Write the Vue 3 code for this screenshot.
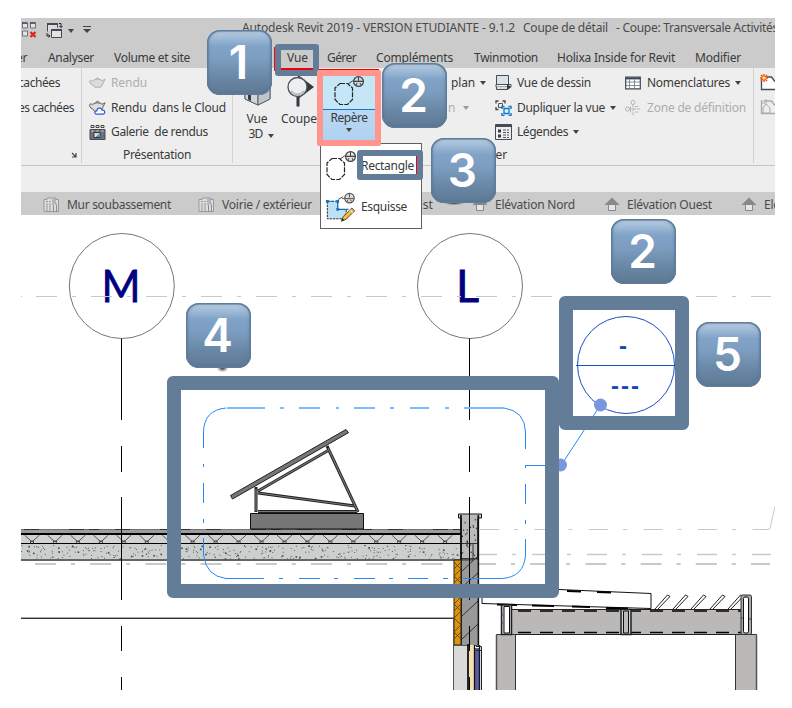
<script setup>
// v-fit="width": tracks a label so that it fills the given width
const vFit = {
  mounted(el, { value }) {
    const natural = el.getBoundingClientRect().width
    el.style.letterSpacing = (value - natural) / el.textContent.length + 'px'
  },
}

const tabs = [
  ['er', 11], ['Analyser', 46], ['Volume et site', 76], ['Vue', 21], ['Gérer', 29],
  ['Compléments', 77], ['Twinmotion', 64], ['Holixa Inside for Revit', 118], ['Modifier', 46],
]

const badges = [
  { n: 1, c: 'b1' }, { n: 2, c: 'b2' }, { n: 3, c: 'b3' },
  { n: 4, c: 'b4' }, { n: 2, c: 'b5' }, { n: 5, c: 'b6' },
]

const insulation = Array.from({ length: 19 }, (_, i) => 32 + i * 22.95)

let seed = 11
const rnd = () => (seed = (seed * 16807) % 2147483647) / 2147483647
const specks = Array.from({ length: 330 }, () => ({
  x: 21 + rnd() * 440, y: 545 + rnd() * 13.5, s: rnd() > 0.85 ? 1.6 : 0.9,
}))
const parapetSpecks = Array.from({ length: 24 }, () => ({ x: 462 + rnd() * 14, y: 519 + rnd() * 38 }))
const louvers = [655, 673, 691, 710, 728]
</script>

<template>
  <div class="page">
    <svg class="defs" width="0" height="0">
      <defs>
        <symbol id="teapot" viewBox="0 0 18 14">
          <path d="M4 4.500c2-2 8-2 10 0l3-1.500-2.500 5-2 3.500H6L4 9C1 8 0 6 1 4.500c1-1 2.500 0 3 1M7 3l2-2 2 2" fill="#dcdcdc" stroke="currentColor" />
        </symbol>
        <symbol id="cloudpot" viewBox="0 0 18 16">
          <path d="M4 4c2-2 8-2 10 0l3-1.500-2.500 5-2 4H6L4 9C1 8 0 6 1 4c1-1 2.500 0 3 1M7 2.500l2-2 2 2" fill="#ddd" stroke="#555" />
          <path d="M8 14.500c-2.500 0-2.500-3.500.3-3.500.2-3.500 4.700-3.800 5.500-.8 3.500-.3 4 4.300.8 4.300z" fill="#fff" stroke="#2a5fd0" stroke-width="1.300" />
        </symbol>
        <symbol id="gallery" viewBox="0 0 16 16">
          <path d="M1.500 1.500h3v2h-3zM6.500 1.500h3v2h-3zM11.500 1.500h3v2h-3z" fill="#eee" stroke="#444" />
          <path d="M.5 5.500h15v10H.5z" fill="#6d737c" stroke="#474c54" />
          <path d="M2 7h2M7 7h2M12 7h2" stroke="#ddd" />
          <path d="M4.500 8.500h6v5h-6z" fill="#eee" stroke="#333" />
          <path d="M6 13l4-4v4z" fill="#479bd5" /><path d="M6 9h3l-3 3z" fill="#ead46a" />
        </symbol>
        <symbol id="closewin" viewBox="0 0 16 17">
          <path d="M1.500 1v5h5V1M9.500 1v5h5V1M1.500 9v5h5V9z" fill="#e4e4e4" stroke="#6b727c" />
          <path d="M1 1h5.500M9 1h5.500" stroke="#333c48" stroke-width="1.500" />
          <path d="M9.500 10l5 5M14.500 10l-5 5" stroke="#d8281d" stroke-width="2.300" />
        </symbol>
        <symbol id="switchwin" viewBox="0 0 18 17">
          <path d="M2.500 9.500v-8h10v4" fill="#ddd" stroke="#434a55" /><path d="M2 2h11" stroke="#434a55" stroke-width="2" />
          <path d="M6.500 7.500h10v8h-10z" fill="#e2e2e2" stroke="#434a55" /><path d="M6 8h11" stroke="#434a55" stroke-width="2" />
          <path d="M14 1.500h2v4M14.500 4L16 5.500 17.500 4M2 11v3h3M3.500 12.500L5 14l-1.500 1.500" fill="none" stroke="#222" />
        </symbol>
        <symbol id="sheet" viewBox="0 0 17 16">
          <path d="M1 2.500h3V1h9v1.500h2.500v12H1z" fill="#dcdcdc" stroke="#97999c" />
          <path d="M3 4.500h6M3 7h11M3 9h6M3 11h6M3 13h6" stroke="#999" stroke-dasharray="2 1" />
          <path d="M10 2v4M12 2v5M10.500 8v7M13.500 8v7" stroke="#8b8e91" />
        </symbol>
        <symbol id="house" viewBox="0 0 16 15">
          <path d="M8 .5L15.500 8H.5z" fill="#85888c" /><path d="M4.500 7.500h7v6h-7z" fill="#e6e6e6" stroke="#85888c" />
        </symbol>
        <symbol id="drafting" viewBox="0 0 17 16">
          <path d="M1.500.5h12v9h-12z" fill="#dfe2e5" stroke="#444c59" /><path d="M1 9.500h15v2.500H1z" fill="#fff" stroke="#444c59" />
          <path d="M1.500 12v2.500h11l3-2.500" fill="#ddd" stroke="#444c59" /><path d="M12 9l4 3-4 3z" fill="#2f3945" />
        </symbol>
        <symbol id="duplicate" viewBox="0 0 17 16">
          <path d="M1 3.500V1h2.500M7.500 1H10v2.500M1 7v2.500h2.500" fill="none" stroke="#444" stroke-width="1.300" /><path d="M3.500 3.500h4v4h-4z" fill="none" stroke="#555" />
          <path d="M7 9V6.500h2.500M13.500 6.500H16V9M7 13v2.500h2.500M13.500 15.500H16V13" fill="none" stroke="#0b78c8" stroke-width="1.400" /><path d="M9 8.500h5v5H9z" fill="#d9f1ff" stroke="#0b78c8" stroke-width="1.300" />
        </symbol>
        <symbol id="legend" viewBox="0 0 17 16">
          <path d="M.5.5h16v15H.5z" fill="#eee" stroke="#444b55" /><path d="M1 2h15" stroke="#444b55" stroke-width="2" />
          <path d="M3 5.500h3v3H3zM3 10.500h3v3H3z" fill="#2f3944" /><path d="M8 6h6M8 8.500h6M8 11h6M8 13.500h6" stroke="#555" stroke-dasharray="3 1" />
        </symbol>
        <symbol id="schedule" viewBox="0 0 16 13">
          <path d="M.7.7h14.600v11.600H.7z" fill="#fff" stroke="#3d4651" stroke-width="1.200" /><path d="M1 2h14" stroke="#3d4651" stroke-width="1.800" />
          <path d="M1 5.500h14M1 9h14M4.500 3v9M9.500 3v9" stroke="#7a828b" stroke-width=".9" />
        </symbol>
        <symbol id="scope" viewBox="0 0 16 16">
          <circle cx="8" cy="2.500" r="2" fill="none" stroke="#b4b4b4" /><circle cx="2.500" cy="9" r="2" fill="none" stroke="#b4b4b4" />
          <path d="M4.500 9H16M8 4.500V16M10 6.500h4M10 12h4M5.500 12.500v-6" stroke="#b4b4b4" stroke-dasharray="3 .8" fill="none" />
        </symbol>
        <symbol id="callout" viewBox="0 0 32 32">
          <path d="M7 7.500h7.500l5 4.500v11.500L14.500 28.500H7L2 23.500V12z" fill="none" stroke="#222" stroke-width="1.200" stroke-dasharray="5 1.200" />
          <path d="M15 8l4.500-3H30" fill="none" stroke="#444" />
          <circle cx="25.500" cy="5.500" r="4.900" fill="#ccc" fill-opacity=".5" stroke="#444" stroke-width="1.200" /><path d="M20 5.500h11M25.500 1v4.500M23 9l1-2M28 9l-1-2" stroke="#444" />
        </symbol>
        <symbol id="sketch" viewBox="0 0 34 32">
          <path d="M2.500 9v18.500h20V17.500h-9V9z" fill="#bce0f4" stroke="#222" stroke-dasharray="2.500 1" />
          <path d="M2.500 9h11v8.500h12" fill="none" stroke="#1671bd" stroke-width="1.300" stroke-dasharray="3 1" />
          <path d="M1 7.500h3v3H1zM12 7.500h3v3h-3zM12 16h3v3h-3z" fill="#1671bd" />
          <path d="M14 7l5-3" stroke="#444" /><circle cx="26" cy="5.500" r="5" fill="#ddd" stroke="#555" stroke-width="1.300" /><path d="M18 6h13M26 1v4M23.500 9l1-2M28 9l-1-2" stroke="#555" />
          <path d="M17.500 30l2-5 9-9 3 3-9 9z" fill="#f4b93c" stroke="#4a4336" /><path d="M26.500 18l3 3" stroke="#ddd" stroke-width="1.500" /><path d="M17.500 30l1-3 2 2z" fill="#222" />
        </symbol>
        <symbol id="house3d" viewBox="0 0 27 32">
          <path d="M1 12L13 3l13 9v12l-12 6-13-6z" fill="#e6e8ea" stroke="#596069" /><path d="M1 12l13 5v13L1 24z" fill="#d0d3d7" stroke="#596069" />
          <path d="M4 15l3 1.500V26l-3-1.500z" fill="#333b45" /><path d="M14 17l12-5v12l-12 6z" fill="#c0c5ca" stroke="#596069" />
        </symbol>
        <symbol id="section" viewBox="0 0 28 32">
          <path d="M11 0l16 12-16 12z" fill="#303842" /><path d="M11 21v10.500" stroke="#303842" stroke-width="3" />
          <circle cx="10.500" cy="12" r="9.500" fill="#eceeef" stroke="#4b525a" stroke-width="1.300" /><path d="M4 16a8 8 0 0 0 13 0" fill="none" stroke="#bbb" stroke-width="2" />
        </symbol>
        <symbol id="newsheet" viewBox="0 0 20 18">
          <path d="M1.500 5v10.500h18V7h-5l-3-4h-5" fill="#fff" stroke="#434b57" stroke-width="1.300" />
          <path d="M4 0v8M0 4h8M1 1l6 6M7 1L1 7" stroke="#e5481c" stroke-width="1.400" /><circle cx="4" cy="4" r="1.800" fill="#ffe94a" />
        </symbol>
        <symbol id="views" viewBox="0 0 20 18">
          <path d="M1.500 2v13.500h18V7h-5l-3-4h-8" fill="#eee" stroke="#aaa" stroke-width="1.300" /><path d="M3 10l3-4 4 4v5H3zM6 1v5M2 5h3" fill="#eee" stroke="#aaa" />
        </symbol>
      </defs>
    </svg>

    <main class="capture">
      <header class="titlebar">
        <div class="quick">
          <svg class="q1"><use href="#closewin" /></svg>
          <svg class="q2"><use href="#switchwin" /></svg>
          <i class="caret"></i>
          <i class="caret lined"></i>
        </div>
        <span v-fit="273" class="t">Autodesk Revit 2019 - VERSION ETUDIANTE - 9.1.2</span>
        <span v-fit="85" class="t name">Coupe de détail</span>
        <span v-fit="162" class="t last">- Coupe: Transversale Activités</span>
      </header>

      <nav class="tabs">
        <span v-for="[label, w] in tabs" :key="label"><b v-fit="w" class="t" :class="{ clipped: label === 'er' }">{{ label }}</b></span>
      </nav>

      <section class="ribbon">
        <div class="panel graphics">
          <span><b v-fit="42" class="t">cachées</b></span>
          <span><b v-fit="56" class="t">es cachées</b></span>
          <span></span>
          <svg class="launcher" viewBox="0 0 6 6"><path d="M1 1l3.500 3.500M5 1v4H1" fill="none" stroke="#444" stroke-width="1.200" /></svg>
        </div>
        <div class="panel render">
          <div class="cmd off"><svg><use href="#teapot" /></svg><b v-fit="36" class="t">Rendu</b></div>
          <div class="cmd"><svg><use href="#cloudpot" /></svg><b v-fit="115" class="t">Rendu&nbsp; dans le Cloud</b></div>
          <div class="cmd"><svg><use href="#gallery" /></svg><b v-fit="97" class="t">Galerie&nbsp; de rendus</b></div>
          <div class="caption"><b v-fit="68" class="t">Présentation</b></div>
        </div>
        <div class="panel create">
          <div class="big view3d">
            <svg><use href="#house3d" /></svg>
            <b v-fit="21" class="t">Vue</b>
            <div class="sub"><b v-fit="14" class="t">3D</b><i class="caret"></i></div>
          </div>
          <div class="big cut">
            <svg><use href="#section" /></svg>
            <b v-fit="36" class="t">Coupe</b>
          </div>
          <div class="big callout">
            <div class="upper"><svg><use href="#callout" /></svg></div>
            <b v-fit="37" class="t">Repère</b>
            <i class="caret"></i>
          </div>
          <div class="stack plans">
            <div class="cmd"><b v-fit="24" class="t">plan</b><i class="caret"></i></div>
            <div class="cmd off n"><b v-fit="7" class="t">n</b><i class="caret"></i></div>
          </div>
          <div class="stack drafting">
            <div class="cmd"><svg><use href="#drafting" /></svg><b v-fit="74" class="t">Vue de dessin</b></div>
            <div class="cmd"><svg><use href="#duplicate" /></svg><b v-fit="88" class="t">Dupliquer la vue</b><i class="caret"></i></div>
            <div class="cmd"><svg><use href="#legend" /></svg><b v-fit="51" class="t">Légendes</b><i class="caret"></i></div>
            <div class="caption"><b v-fit="30" class="t">Créer</b></div>
          </div>
          <div class="stack tables">
            <div class="cmd"><svg><use href="#schedule" /></svg><b v-fit="83" class="t">Nomenclatures</b><i class="caret"></i></div>
            <div class="cmd off"><svg><use href="#scope" /></svg><b v-fit="99" class="t">Zone de définition</b></div>
          </div>
        </div>
        <div class="panel sheets">
          <svg><use href="#newsheet" /></svg>
          <svg><use href="#views" /></svg>
        </div>
      </section>

      <div class="options"></div>

      <nav class="docs">
        <span><svg><use href="#sheet" /></svg><b v-fit="104" class="t">Mur soubassement</b></span>
        <span><svg><use href="#sheet" /></svg><b v-fit="90" class="t">Voirie / extérieur</b></span>
        <span class="east"><b v-fit="72" class="t">Elévation Est</b></span>
        <span class="el"><svg><use href="#house" /></svg><b v-fit="80" class="t">Elévation Nord</b></span>
        <span class="el"><svg><use href="#house" /></svg><b v-fit="85" class="t">Elévation Ouest</b></span>
        <span class="el"><svg><use href="#house" /></svg><b v-fit="72" class="t">Elévation Sud</b></span>
      </nav>

      <svg class="canvas" viewBox="21 215 754 475" width="754" height="475">
        <!-- grid bubbles -->
        <g fill="none" stroke="#777">
          <circle cx="121.800" cy="286" r="52.500" /><circle cx="470" cy="286" r="52.500" />
        </g>
        <text class="axis" x="101.500" y="302" textLength="39" lengthAdjust="spacingAndGlyphs">M</text>
        <text class="axis" x="456" y="302">L</text>

        <!-- level lines -->
        <g stroke="#c9c9c9" fill="none">
          <path d="M21 296.500h1M36 296.500H771" stroke-dasharray="21 15 4 15" />
          <path d="M480 529.500H768" stroke-dasharray="19 15 4 16.500" />
          <path d="M768 529.500l2-1 5-22" />
          <path d="M477 554.500H771" stroke-width="1.500" stroke-dasharray="20 15 4 16" />
          <path d="M35 564H460M475 564H770" stroke-width="1.800" stroke-dasharray="21 15 4 15.200" />
        </g>

        <!-- roof slab -->
        <path d="M21 529h440v5H21z" fill="#9c9c9c" />
        <path d="M21 535h440v8H21z" fill="#d3d2d2" />
        <path d="M21 544h440v15H21z" fill="#cbcfcd" />
        <path d="M24 529.500H461" stroke="#000" stroke-dasharray="15 30 15 5 10 16" />
        <path d="M21 529.500H461" stroke="#555" stroke-width=".6" />
        <path d="M21 534H461" stroke="#000" stroke-width="2" />
        <path d="M21 543.500H461" stroke="#000" />
        <path d="M21 560H461" stroke="#666" stroke-width="2" />
        <path v-for="x in insulation" :key="x" :d="`M${x - 7.5} 535l7.500 7 7.500-7M${x - 1.500} 543v-2h3v2`" fill="none" stroke="#444" stroke-width=".9" />
        <rect v-for="(s, i) in specks" :key="i" :x="s.x" :y="s.y" :width="s.s" :height="s.s" fill="#454947" />
        <path d="M21 617.500H453" stroke="#aaa" /><path d="M21 618.500H453" stroke="#333" />

        <!-- solar panel -->
        <path d="M250.500 513.500h113v15.500h-113z" fill="#777" stroke="#111" />
        <path d="M256 487v25M258 511.500h99M258 491l71-41M258 493l97 13M327 446l31 66" stroke="#222" stroke-width="3" fill="none" />
        <path d="M256 489v22M258 511.500h99M258 491l70-40.500M258 493l96 13M328 448l29.500 63" stroke="#777" stroke-width="1.200" fill="none" />
        <path d="M230.500 495.500L346 429.500l2.500 3.200L232.500 499z" fill="#777" stroke="#222" />

        <!-- wall and parapet -->
        <path d="M461 515h17v44h-17z" fill="#bababa" stroke="#111" stroke-width="1.300" />
        <path d="M458.500 514h23v4h-23z" fill="#ccd2cc" stroke="#111" />
        <path d="M461.500 515h16v4h-16z" fill="#bababa" />
        <rect v-for="(s, i) in parapetSpecks" :key="'p' + i" :x="s.x" :y="s.y" width="1" height="1.500" fill="#333" />
        <path d="M461 559.500h16.500V645H461z" fill="#999" />
        <path d="M461 543.500h17M461 560h12v-16M461 572l17-16M461 588l17-15M461 617l17-16M461 640l17-16" stroke="#333" fill="none" />
        <path d="M478.300 515v130M461 515v130" stroke="#111" stroke-width="1.700" />
        <path d="M454 560h7v85h-7z" fill="#dd930e" stroke="#222" />
        <path d="M454 562l7 7-7 7 7 7-7 7 7 7-7 7 7 7-7 7 7 7-7 7 7 7M461 562l-7 7M461 576l-7 7M461 604l-7 7M461 632l-7 7" fill="none" stroke="#513d15" stroke-width=".8" />
        <path d="M453.500 645.500h15V690h-15z" fill="#d9d9d9" /><path d="M453.500 617v73M453 645.500h26" stroke="#555" />
        <path d="M469 645h6v45h-6z" fill="#f5e2ae" /><path d="M475 648h4v42h-4z" fill="#5b5da9" />
        <path d="M468 644v46" stroke="#111" stroke-width="1.800" /><path d="M474.500 645v45M479.500 645v45" stroke="#111" stroke-width="1.300" />
        <path d="M476 646.500h5.500v4H476M481.500 650v40" fill="none" stroke="#222" />
        <path d="M121.500 338.500V420M121.500 446v26M121.500 497V600M121.500 626v25M121.500 677v13M469.500 338.500V420M469.500 446v26M469.500 497V600M469.500 626v25M469.500 677v13" stroke="#000" />

        <!-- lower canopy -->
        <path d="M482 589.500h77l92 4v15L482 603.500z" fill="#fff" stroke="#111" />
        <path d="M567 591l14 .5M597 592l14 .5M497 604.500l20 .5M532 605.500l22 .5M572 606.500l18 .5M606 608l22 .5" stroke="#000" stroke-width="2" />
        <path d="M511 610h230v24H511z" fill="#bbb9b8" /><path d="M511 609.500h230M511 634.500h230" stroke="#222" />
        <path d="M518 611h223M518 632.500h223" stroke="#000" stroke-width="1.300" stroke-dasharray="13 9" />
        <path d="M496.500 634.500h19V691h-19zM735.500 634.500h21V691h-21z" fill="#bbb9b8" stroke="#333" />
        <path d="M496.500 635v55M756.500 635v55" stroke="#555" stroke-width="1.500" />
        <g v-for="x in louvers" :key="x">
          <path :d="`M${x} 609l12.500-14 2.500 1.500-12 12.500`" fill="#fff" stroke="#222" />
        </g>
        <path d="M501.500 605h10v29.500h-10zM621 609.500h10v25h-10z" fill="#ccc" stroke="#222" stroke-width="1.500" />
        <rect x="741" y="595" width="10.500" height="39.500" rx="1.500" fill="#aaa" stroke="#333" />
        <path d="M504 606.500h5.500v26.500H504z" fill="#fff" stroke="#111" /><rect x="743.500" y="597" width="5" height="36" rx="1.500" fill="#fff" stroke="#111" /><path d="M623.500 611h5v22h-5z" fill="#bbb" stroke="#111" />
        <path d="M502 614v2M502 622v2M742 617v2M750 618v2" stroke="#3634a0" />

        <!-- callout boundary -->
        <g fill="none" stroke="#2589f5">
          <path d="M203.500 432Q204 410 226 408M504 408Q525 411 525.500 432M525.500 555Q524 577 502 578.500M226 578.500Q206 576 203.500 555" />
          <path d="M227 408H265M280 408h4M299 408h21M336 408h3M354 408h21M390 408h4M410 408h19M445 408h4M464 408h40" stroke="#7abaff" stroke-width="2" />
          <path d="M226 578.500h38M279 578.500h4M299 578.500h21M334 578.500h4M354 578.500h21M389 578.500h4M408 578.500h20M443 578.500h5M463 578.500h39" />
          <path d="M203.500 431v17M203.500 464v3M203.500 483v20M203.500 519v4M203.500 538v17M525.500 431v18M525.500 468v-3M525.500 484v20M525.500 520v4M525.500 539v16" />
          <path d="M525.500 465.500H561L600.500 405" />
        </g>
        <g fill="none" stroke="#1a4fc4"><circle cx="626" cy="365" r="48.500" /><path d="M576 365.500h98" /></g>
        <text class="mark" x="619" y="353.500">-</text>
        <text class="mark" x="611" y="393.500">---</text>
        <circle cx="600.500" cy="405" r="6.500" fill="#7797df" /><circle cx="560.500" cy="465" r="6.500" fill="#7797df" />
      </svg>
    </main>

    <div class="menu">
      <div><svg><use href="#callout" /></svg><b v-fit="53" class="t">Rectangle</b></div>
      <div><svg><use href="#sketch" /></svg><b v-fit="46" class="t">Esquisse</b></div>
    </div>

    <div class="frame f-tab"></div>
    <div class="frame f-callout"></div>
    <div class="frame f-item"></div>
    <div class="frame f-zone"></div>
    <div class="frame f-mark"></div>
    <div v-for="b in badges" :key="b.c" class="badge" :class="b.c">{{ b.n }}</div>
  </div>
</template>

<style>
body { margin: 0; background: #fff; }
</style>

<style scoped>
.page { position: relative; box-sizing: border-box; width: 792px; height: 708px; padding: 18px 17px 18px 21px; overflow: hidden; background: #fff; font: 12px/16px "Noto Sans", "Open Sans", sans-serif; color: #3a3a3a; }
.defs { position: absolute; }
.capture { width: 754px; height: 672px; overflow: hidden; }
svg { display: block; flex: none; }
.t { display: inline-block; flex: none; font-weight: 400; white-space: pre; }
.caret { flex: none; width: 0; height: 0; border: 3px solid transparent; border-top: 4px solid #444; border-bottom: 0; }

.titlebar { display: flex; height: 28px; box-sizing: border-box; padding-top: 2px; background: #cbcbcb; color: #4a4a4a; }
.quick { display: flex; width: 221px; align-items: flex-start; flex: none; }
.q1 { width: 16px; height: 17px; margin-top: 2px; }
.q2 { width: 18px; height: 17px; margin: 2px 5px 0 8px; }
.quick .caret { margin-top: 9px; }
.quick .lined { position: relative; margin-left: 9px; border-width: 4px 4px 0; }
.lined::before { content: ""; position: absolute; left: -4px; top: -7px; width: 8px; height: 1px; background: #444; }
.titlebar .t { align-self: flex-start; }
.titlebar .name { margin-left: 8px; }
.titlebar .last { margin-left: 8px; }

.tabs { display: grid; grid-template-columns: 27px 66px 173px 40px 49px 98px 83px 138px 80px; height: 22px; align-items: center; padding-top: 1px; box-sizing: border-box; background: #cbcbcb; }
.tabs span { display: flex; }
.clipped { margin-left: -5px; }

.ribbon { display: flex; height: 97px; background: #eee; border-bottom: 1px solid #c6c6c6; overflow: hidden; }
.panel { box-sizing: border-box; flex: none; padding-top: 3px; height: 95px; border-right: 1px solid #d3d3d3; }
.graphics { width: 61px; display: grid; grid-template-rows: 24px 25px 24px 22px; align-items: center; }
.graphics span { display: flex; }
.graphics span .t { margin-left: -3px; }
.launcher { width: 6px; height: 6px; justify-self: end; margin-right: 4px; }
.render { width: 151px; padding-left: 7px; display: grid; grid-template-rows: 24px 25px 24px 22px; }
.cmd { display: flex; align-items: center; }
.cmd svg { width: 17px; height: 16px; margin-right: 5px; }
.cmd .caret { margin-left: 5px; }
.off { color: #adadad; }
.off .caret { border-top-color: #999; }
.caption { display: flex; align-items: center; }
.render .caption { padding-left: 34px; }
.create { width: 521px; display: flex; }
.big { display: flex; flex-direction: column; align-items: center; flex: none; }
.view3d { width: 28px; padding: 4px 0 0 10px; margin-right: 9px; }
.view3d svg { width: 27px; height: 32px; margin-bottom: 4px; }
.sub { display: flex; align-items: flex-start; gap: 5px; margin: -1px 0 0 8px; }
.sub .caret { margin-top: 8px; }
.cut { width: 38px; padding-top: 4px; margin-right: 5px; }
.cut svg { width: 28px; height: 32px; margin: 0 0 4px 4px; }
.callout { width: 52px; height: 64px; margin-top: 5px; background: linear-gradient(#c4e6f6 0 33px, #b9d8f4 34px, #b0d1f0); }
.upper { width: 52px; height: 33px; border-bottom: 1px solid #1876ca; }
.upper svg { width: 32px; height: 32px; margin: 0 auto; }
.big.callout .caret { margin-top: 2px; }
.stack { display: grid; grid-template-rows: 24px 25px 24px 22px; flex: none; }
.plans { width: 120px; padding-left: 76px; box-sizing: border-box; }
.plans .n { margin-left: -3px; }
.plans .n .caret { margin-left: 8px; }
.drafting { width: 130px; }
.drafting .caption { margin-left: -18px; }
.tables .cmd svg { width: 16px; height: 14px; margin-right: 6px; }
.tables .off svg { height: 16px; }
.sheets { width: 30px; padding: 6px 0 0 6px; border: 0; display: flex; flex-direction: column; gap: 6px; }
.sheets svg { width: 20px; height: 18px; }

.options { height: 26px; background: #eee; }
.docs { display: grid; grid-template-columns: 155px 155px 119px 132px 137px 100px; height: 23px; box-sizing: border-box; padding: 2px 0 0 22px; background: #cbcbcb; overflow: hidden; color: #4a4a4a; }
.docs span { display: flex; align-items: center; }
.docs span svg { width: 17px; height: 16px; margin-right: 7px; }
.docs .el svg { width: 16px; height: 15px; margin-right: 7px; }
.docs .east { padding-left: 8px; }

.axis { font: 400 45px Lato, sans-serif; fill: #000080; stroke: #000080; stroke-width: .8px; }
.mark { font: 700 24px "Liberation Sans", sans-serif; letter-spacing: 2px; fill: #1448bd; }

.menu { position: absolute; left: 320px; top: 143px; width: 102px; height: 86px; box-sizing: border-box; background: #fff; border: 1px solid #606060; padding: 5px 0 0 4px; }
.menu div { display: flex; align-items: flex-start; height: 41px; }
.menu svg { width: 32px; height: 32px; margin: 2px 4px 0 0; }
.menu .t { margin-top: 9px; }

.frame { position: absolute; box-sizing: border-box; border: 6px solid #637c97; border-radius: 3px; }
.f-tab { left: 275px; top: 44px; width: 44px; height: 32px; box-shadow: inset 0 -2px #f00014; }
.f-tab::before { content: ""; position: absolute; left: -7px; top: -3px; width: 1px; height: 24px; background: #f00; }
.f-callout { left: 317px; top: 70px; width: 64px; height: 76px; border-color: #ff958d; border-radius: 2px; }
.f-callout::before { content: ""; position: absolute; left: -4px; top: -7px; width: 60px; height: 1px; background: #e00; }
.f-item { left: 357px; top: 150px; width: 66px; height: 30px; box-shadow: inset -1px 0 #f00014; }
.f-zone { left: 167px; top: 376px; width: 392px; height: 222px; border-width: 14px; border-radius: 6px; }
.f-mark { left: 559px; top: 296px; width: 130px; height: 134px; border-width: 14px; border-radius: 6px; }

.badge { position: absolute; box-sizing: border-box; width: 65px; height: 65px; padding-right: 2px; border-radius: 13px; background: linear-gradient(#c3d5e5 0, #a6c0da 9%, #81a3c8 25%, #7c9dc0 45%, #6886a4 75%, #5d7892); box-shadow: inset 0 0 0 1.500px #5f7c9b, inset 0 0 4px #4f6c8b; color: #fff; font: 600 46px/65px Inter, sans-serif; text-align: center; }
.b1 { left: 207px; top: 30px; }
.b2 { left: 382px; top: 63px; }
.b3 { left: 431px; top: 138px; }
.b4 { left: 186px; top: 303px; }
.b5 { left: 611px; top: 219px; }
.b6 { left: 696px; top: 322px; }
.b3::after, .b4::after { content: ""; position: absolute; left: 31px; top: 65px; width: 11px; height: 4px; background: radial-gradient(ellipse at top, #333, transparent 75%); }
.b3::after { left: 13px; width: 20px; height: 2px; }
</style>
